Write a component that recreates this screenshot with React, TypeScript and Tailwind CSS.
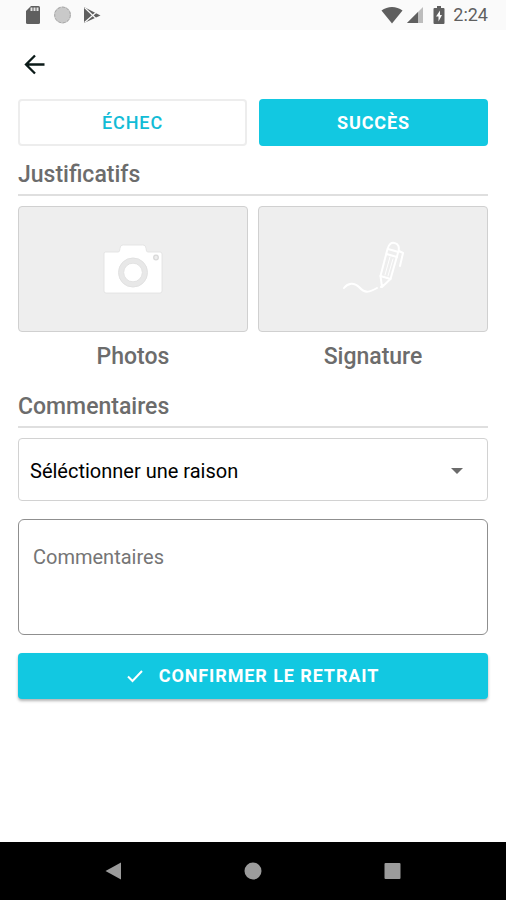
import React, { useState } from 'react';

type Outcome = 'failure' | 'success';

const REASONS = ['Client absent', 'Adresse incorrecte', 'Colis endommagé'];

const StatusBar: React.FC = () => (
  <div className="flex h-[30px] items-center justify-between bg-[#fafafa] pl-6 pr-[18px] text-[#5f5f5f]">
    <div className="flex items-center gap-3">
      <svg viewBox="0 0 18 20" className="h-5 w-[18px]" fill="currentColor" aria-hidden="true">
        <path d="M7 1h7.500a1.500 1.500 0 0 1 1.500 1.500v15a1.500 1.500 0 0 1-1.500 1.500h-11A1.500 1.500 0 0 1 2 17.500V6z" />
        <path d="M6.500 2.500h2v3.600h-2zM9.500 2.500h2v3.600h-2zM12.500 2.500h2v3.600h-2z" fill="#e4e4e4" />
      </svg>
      <svg viewBox="0 0 18 18" className="h-[18px] w-[18px]" aria-hidden="true">
        <circle cx="8.500" cy="9" r="8.500" fill="#c9c9c9" />
        <circle cx="8.500" cy="9" r="7.800" fill="none" stroke="#a8a8a8" strokeDasharray="3 1.500" />
      </svg>
      <svg viewBox="0 0 18 18" className="h-[18px] w-[18px]" aria-hidden="true">
        <path d="M0 1l16.500 8.500L0 17z" fill="currentColor" />
        <path d="M.5 1.500l11.500 11M.5 16.500L12 6.500" fill="none" stroke="#fafafa" strokeWidth="1.200" />
      </svg>
    </div>
    <div className="flex items-center">
      <svg viewBox="0 0 22 18" className="h-[18px] w-[22px]" fill="currentColor" aria-hidden="true">
        <path d="M.5 4.600C6.500-.1 15.500-.1 21.500 4.600L11 17.500z" />
      </svg>
      <svg viewBox="0 0 18 18" className="ml-[3px] h-[18px] w-[18px]" aria-hidden="true">
        <path d="M17 1v16H1z" fill="#bdbdbd" />
        <path d="M12 6v11H1z" fill="currentColor" />
      </svg>
      <svg viewBox="0 0 12 18" className="ml-[9px] h-[18px] w-3" aria-hidden="true">
        <path d="M4 0h4v2h2.500a1 1 0 0 1 1 1v14a1 1 0 0 1-1 1h-9a1 1 0 0 1-1-1V3a1 1 0 0 1 1-1H4z" fill="currentColor" />
        <path d="M7 4.500L3 10.500h2.500V15.500L9 9H7z" fill="#fafafa" />
      </svg>
      <span className="ml-2 text-lg leading-5">2:24</span>
    </div>
  </div>
);

const CameraIcon: React.FC = () => (
  <svg viewBox="0 0 60 50" className="h-[50px] w-[60px]" aria-hidden="true">
    <path
      d="M2 8h13c1.500 0 1.500-1 2-3.500C17.500 2 18 1 20.500 1h19C42 1 42.500 2 43 4.500 43.500 7 43.500 8 45 8h12a2 2 0 0 1 2 2v37a2 2 0 0 1-2 2H3a2 2 0 0 1-2-2V10a2 2 0 0 1 1-2z"
      fill="#fff"
      stroke="#e0e0e0"
      strokeWidth="0.800"
    />
    <circle cx="30" cy="28.500" r="12" fill="#fff" stroke="#e8e8e8" strokeWidth="5.500" />
    <circle cx="30" cy="28.500" r="14.500" fill="none" stroke="#dfdfdf" strokeWidth="0.800" />
    <circle cx="30" cy="28.500" r="9.300" fill="none" stroke="#dfdfdf" strokeWidth="0.800" />
    <circle cx="53" cy="13.500" r="2.300" fill="#eee" stroke="#d9d9d9" strokeWidth="1.300" />
  </svg>
);

const SignatureIcon: React.FC = () => (
  <svg
    viewBox="0 0 62 62"
    className="h-[62px] w-[62px]"
    fill="none"
    stroke="#fff"
    strokeWidth="2"
    strokeLinecap="round"
    strokeLinejoin="round"
    aria-hidden="true"
  >
    <path d="M2 50c4-5 10-6 15-1 6 7 11 5 18 1" />
    <path d="M38.500 38l7-27c1.500-5 4-7 7-6 4 1 5 4 4 8l-8 28-8.500 8z" />
    <path d="M38.500 38l10 3M44.500 16l10.500 3M46 11l10.500 3M41 47l-2 2" />
    <path d="M48 19l-5 18M51 21l-5 17" strokeWidth="1" />
    <path d="M57 13l4 2-3 13" />
  </svg>
);

interface OutcomeButtonProps {
  label: string;
  active: boolean;
  onClick: () => void;
}

const OutcomeButton: React.FC<OutcomeButtonProps> = ({ label, active, onClick }) => (
  <button
    type="button"
    aria-pressed={active}
    onClick={onClick}
    className={`h-[47px] flex-1 rounded border-2 text-lg leading-6 tracking-wider ${
      active
        ? 'border-[#12c8e1] bg-[#12c8e1] font-bold text-white'
        : 'border-[#ededed] bg-white font-medium text-[#12bcd6]'
    }`}
  >
    {label}
  </button>
);

interface ProofCardProps {
  label: string;
  icon: React.ReactNode;
}

const ProofCard: React.FC<ProofCardProps> = ({ label, icon }) => (
  <button type="button" className="flex flex-1 flex-col">
    <span className="flex h-[126px] w-full items-center justify-center rounded border border-[#d0d0d0] bg-[#eee]">
      {icon}
    </span>
    <span className="mt-[9px] w-full text-center text-[23px] leading-8 font-medium text-[#6c6c6c]">{label}</span>
  </button>
);

const SectionTitle: React.FC<{ children: React.ReactNode }> = ({ children }) => (
  <h2 className="border-b-2 border-[#dfdfdf] pb-[3px] text-[23px] leading-8 font-medium text-[#6c6c6c]">{children}</h2>
);

const NavigationBar: React.FC = () => (
  <nav className="grid h-[58px] grid-cols-3 justify-items-center bg-black px-11 text-[#9b9b9b]">
    <button type="button" aria-label="Retour système">
      <svg viewBox="0 0 18 18" className="h-[18px] w-[18px]" fill="currentColor" aria-hidden="true">
        <path d="M16 .5v17L.5 9z" />
      </svg>
    </button>
    <button type="button" aria-label="Accueil">
      <svg viewBox="0 0 18 18" className="h-[18px] w-[18px]" fill="currentColor" aria-hidden="true">
        <circle cx="9" cy="9" r="8.500" />
      </svg>
    </button>
    <button type="button" aria-label="Applications récentes">
      <svg viewBox="0 0 18 18" className="h-[18px] w-[18px]" fill="currentColor" aria-hidden="true">
        <rect x="1.500" y="1" width="16" height="16" rx="1" />
      </svg>
    </button>
  </nav>
);

const App: React.FC = () => {
  const [outcome, setOutcome] = useState<Outcome>('success');
  const [reason, setReason] = useState('');
  const [comment, setComment] = useState('');

  return (
    <div className="flex min-h-screen flex-col bg-white font-[Roboto,sans-serif]">
      <StatusBar />

      <header className="flex h-[69px] items-center px-6">
        <button type="button" aria-label="Retour">
          <svg viewBox="0 0 22 22" className="h-[22px] w-[22px]" fill="none" stroke="#0b1a18" strokeWidth="2.300" aria-hidden="true">
            <path d="M20.500 10.500H3M11 1.500l-9 9 9 9" />
          </svg>
        </button>
      </header>

      <main className="flex flex-1 flex-col px-[18px]">
        <div className="flex gap-3">
          <OutcomeButton label="ÉCHEC" active={outcome === 'failure'} onClick={() => setOutcome('failure')} />
          <OutcomeButton label="SUCCÈS" active={outcome === 'success'} onClick={() => setOutcome('success')} />
        </div>

        <section className="mt-[13px]">
          <SectionTitle>Justificatifs</SectionTitle>
          <div className="mt-[10px] flex gap-[10px]">
            <ProofCard label="Photos" icon={<CameraIcon />} />
            <ProofCard label="Signature" icon={<SignatureIcon />} />
          </div>
        </section>

        <section className="mt-[18px]">
          <SectionTitle>Commentaires</SectionTitle>
          <div className="relative mt-[10px]">
            <select
              aria-label="Raison"
              value={reason}
              onChange={(e) => setReason(e.target.value)}
              className="block h-[63px] w-full appearance-none rounded border border-[#d2d2d2] bg-white px-[11px] pt-[3px] text-xl text-black"
            >
              <option value="">Séléctionner une raison</option>
              {REASONS.map((item) => (
                <option key={item} value={item}>
                  {item}
                </option>
              ))}
            </select>
            <svg
              viewBox="0 0 12 6"
              className="pointer-events-none absolute top-[30px] right-[25px] h-[6px] w-3"
              fill="#6b6b6b"
              aria-hidden="true"
            >
              <path d="M0 0h12L6 6z" />
            </svg>
          </div>
          <textarea
            aria-label="Commentaires"
            placeholder="Commentaires"
            value={comment}
            onChange={(e) => setComment(e.target.value)}
            className="mt-[18px] block h-[116px] w-full resize-none rounded-md border border-[#8f8f8f] px-[14px] py-[23px] text-xl leading-7 text-black placeholder:text-[#757575]"
          />
        </section>

        <button
          type="button"
          className="mt-[18px] flex h-[46px] items-center justify-center gap-4 rounded bg-[#12c8e1] text-lg leading-6 font-bold tracking-wider text-white shadow-[0_2px_3px_rgba(0,0,0,0.3)]"
        >
          <svg viewBox="0 0 16 14" className="h-[14px] w-4" fill="none" stroke="currentColor" strokeWidth="2" aria-hidden="true">
            <path d="M1 7.500L5.500 12 15 2" />
          </svg>
          CONFIRMER LE RETRAIT
        </button>
      </main>

      <NavigationBar />
    </div>
  );
};

export default App;
